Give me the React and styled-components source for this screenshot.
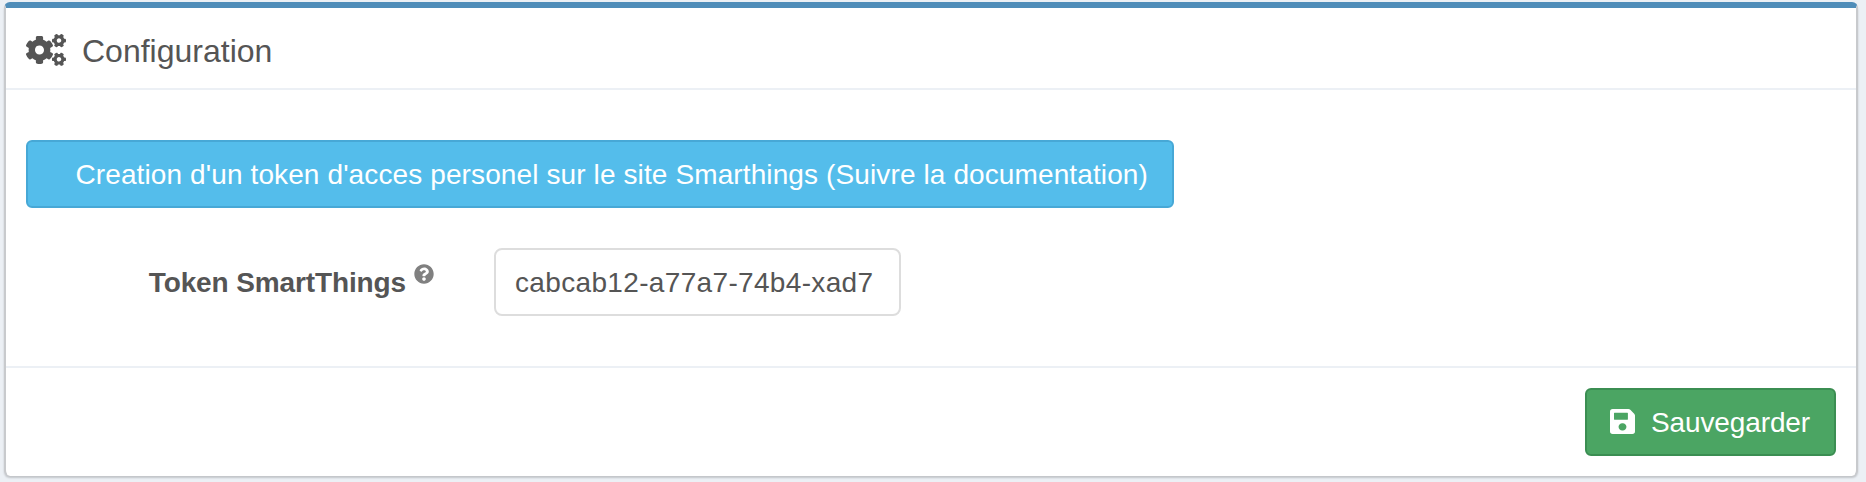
import React from "react";
import styled, { createGlobalStyle } from "styled-components";
import { FaCogs, FaQuestionCircle } from "react-icons/fa";

const GlobalStyle = createGlobalStyle`
  *, *::before, *::after { box-sizing: border-box; }
  body {
    margin: 0;
    background: #ecf0f5;
    color: #555;
    font: 28px/40px "Liberation Sans", Arial, sans-serif;
  }
`;

const Page = styled.main`
  height: 482px;
  padding: 2px 8px 4px 4px;
  overflow: hidden;
`;

const Card = styled.section`
  height: 474px;
  display: flex;
  flex-direction: column;
  background: #fff;
  border: 2px solid #c8cacd;
  border-top: 6px solid #4f8db9;
  border-bottom: 0;
  border-radius: 6px;
  box-shadow: 0 2px 2px rgba(0, 0, 0, 0.18);
`;

const CardHeader = styled.header`
  height: 82px;
  padding: 4px 20px 0;
  display: flex;
  align-items: center;
  gap: 16px;
  border-bottom: 2px solid #ecf0f5;

  svg { width: 40px; height: 32px; }
`;

const Title = styled.h3`
  margin: 0;
  padding-top: 2px;
  font-size: 32px;
  font-weight: 400;
  line-height: 36px;
`;

const CardBody = styled.div`
  height: 276px;
  padding: 50px 20px 0;
`;

const CardFooter = styled.footer`
  flex: 1;
  padding: 20px;
  display: flex;
  justify-content: flex-end;
  border-top: 2px solid #ecf0f5;
`;

const tones = {
  info: { fill: "#54bdeb", edge: "#47a8d6" },
  success: { fill: "#4ba563", edge: "#3b8e52" },
};

const Button = styled.button`
  height: 68px;
  width: ${(p) => p.$width}px;
  padding: 1px ${(p) => (p.$tone === "info" ? 24 : 23)}px 0;
  display: flex;
  align-items: center;
  justify-content: ${(p) => (p.$tone === "info" ? "flex-end" : "flex-start")};
  gap: 16px;
  color: #fff;
  background: ${(p) => tones[p.$tone].fill};
  border: 2px solid ${(p) => tones[p.$tone].edge};
  border-radius: 6px;
  font: inherit;
  letter-spacing: ${(p) => (p.$tone === "info" ? 0.115 : -0.12)}px;
  white-space: nowrap;

  svg { width: 25px; height: 25px; margin-bottom: 3px; }
`;

const FormRow = styled.div`
  margin-top: 40px;
  display: flex;
  align-items: center;
`;

const Label = styled.label`
  width: 468px;
  padding: 1px 60px 0 0;
  display: flex;
  justify-content: flex-end;
  gap: 8px;
  font-weight: 700;
  letter-spacing: -0.12px;
  white-space: nowrap;
`;

const Help = styled.span`
  display: flex;
  margin-top: 1px;
  color: #808080;

  svg { width: 20px; height: 20px; }
`;

const Input = styled.input`
  width: 407px;
  height: 68px;
  padding: 1px 19px 0;
  color: #555;
  background: #fff;
  border: 2px solid #ddd;
  border-radius: 8px;
  font: inherit;
  letter-spacing: 0.34px;
  outline: none;
`;

const SaveIcon = () => (
  <svg viewBox="0 0 25 25" fill="currentColor" aria-hidden="true">
    <path
      fillRule="evenodd"
      d="M2.7 0H18.4Q19.5 0 20.3.8L24.2 4.7Q25 5.5 25 6.6V22.3Q25 25 22.3 25H2.7Q0 25 0 22.3V2.7Q0 0 2.7 0ZM4.4 3.8Q4 3.8 4 4.2V10.3Q4 10.7 4.4 10.7H17.5Q17.9 10.7 17.9 10.3V4.2Q17.9 3.8 17.5 3.8ZM12.5 14.3A3.57 3.57 0 1 0 12.5 21.4A3.57 3.57 0 1 0 12.5 14.3Z"
    />
  </svg>
);

export default function App() {
  return (
    <>
      <GlobalStyle />
      <Page>
        <Card>
          <CardHeader>
            <FaCogs />
            <Title>Configuration</Title>
          </CardHeader>
          <CardBody>
            <Button type="button" $tone="info" $width={1148}>
              Creation d'un token d'acces personel sur le site Smarthings (Suivre la documentation)
            </Button>
            <FormRow>
              <Label htmlFor="token">
                Token SmartThings
                <Help><FaQuestionCircle /></Help>
              </Label>
              <Input id="token" type="text" defaultValue="cabcab12-a77a7-74b4-xad7" />
            </FormRow>
          </CardBody>
          <CardFooter>
            <Button type="button" $tone="success" $width={251}>
              <SaveIcon />
              Sauvegarder
            </Button>
          </CardFooter>
        </Card>
      </Page>
    </>
  );
}
